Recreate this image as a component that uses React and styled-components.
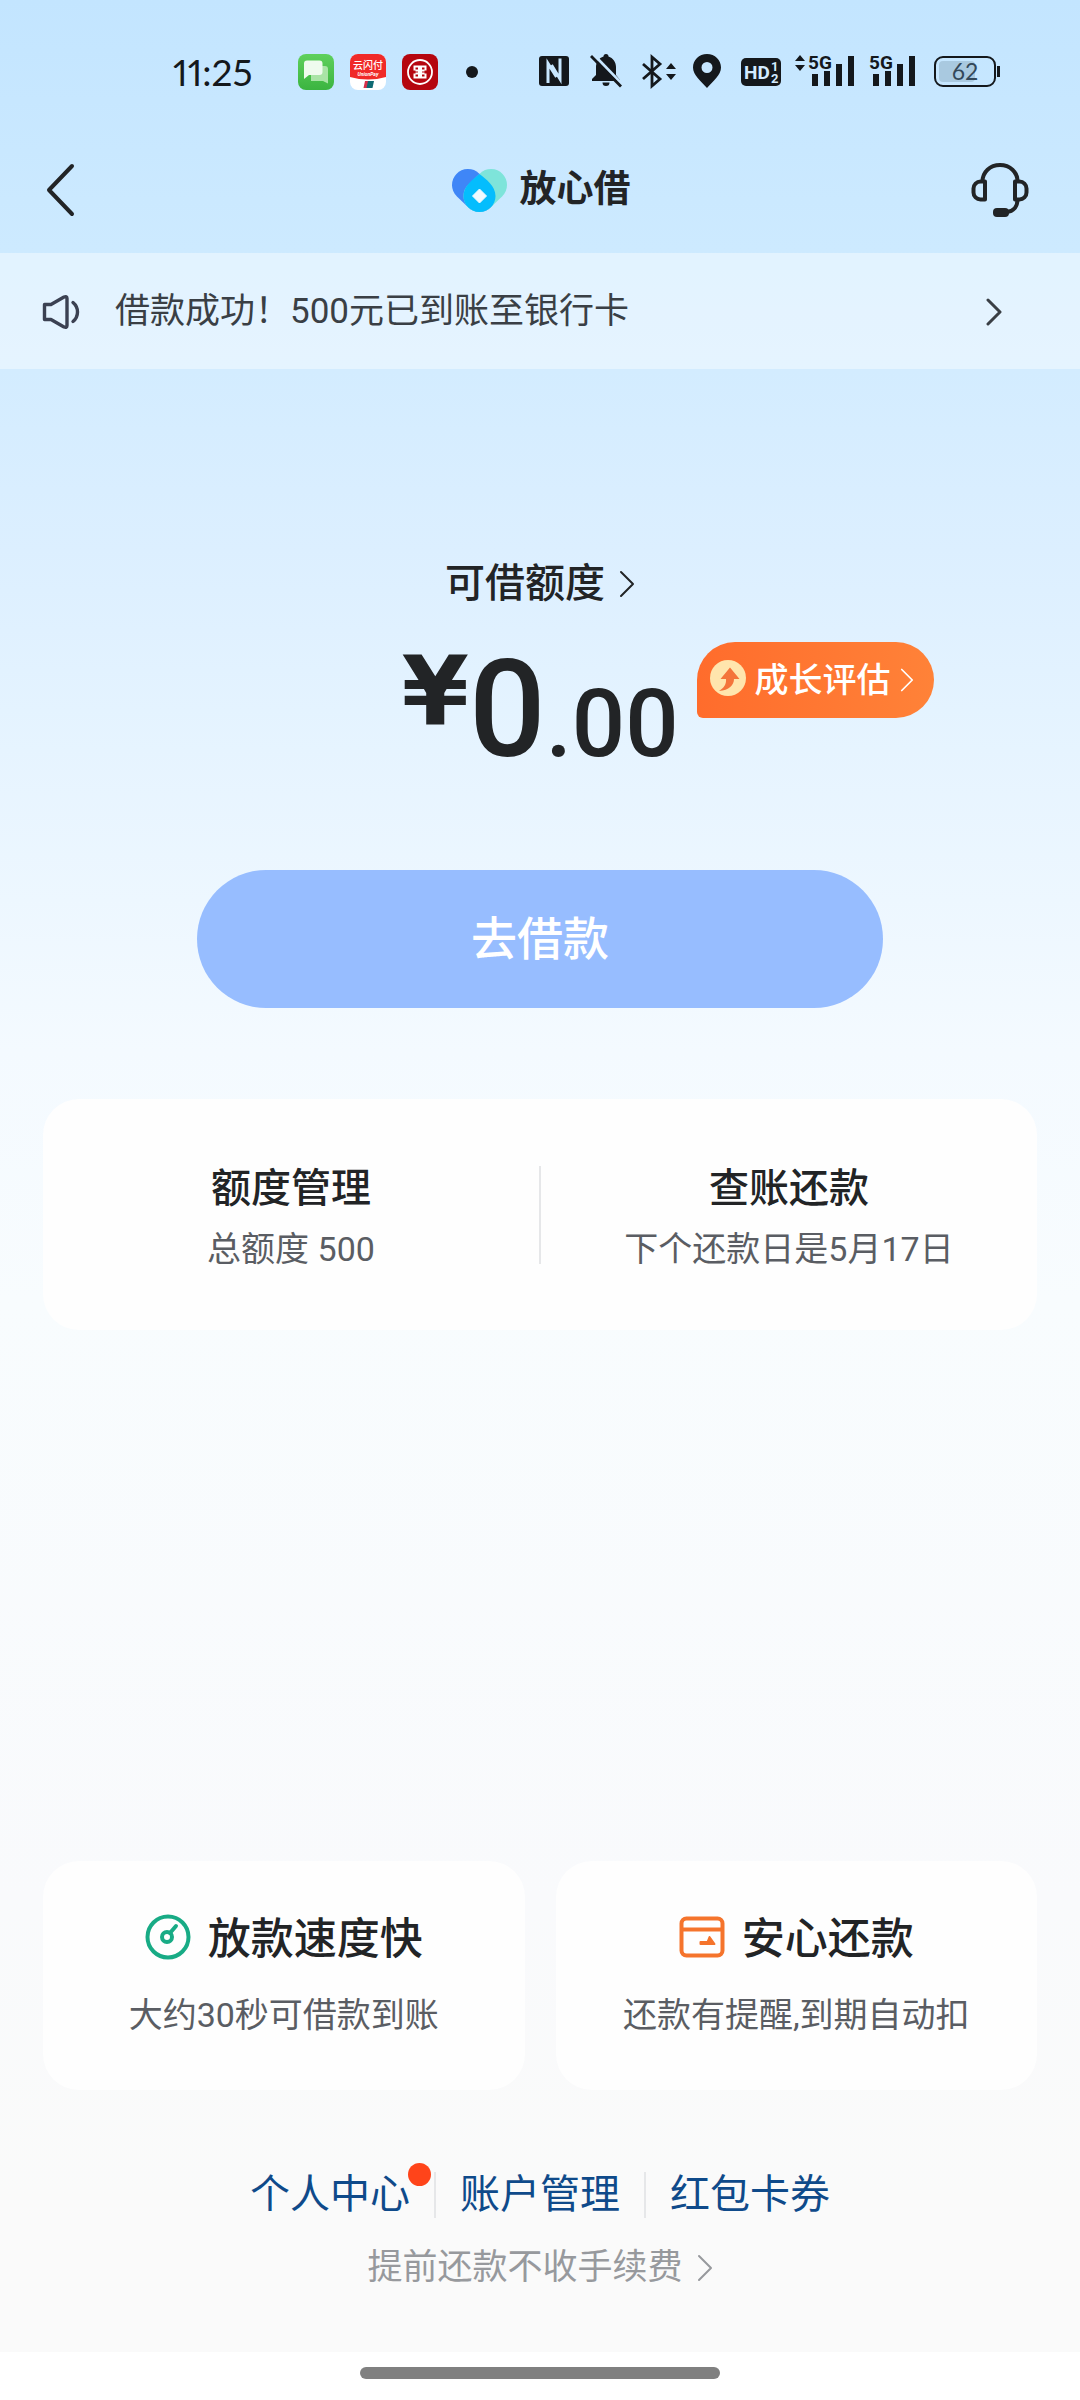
import React from 'react';
import styled, { createGlobalStyle } from 'styled-components';

const GlobalStyle = createGlobalStyle`
  *, *::before, *::after { box-sizing: border-box; }
  body {
    margin: 0;
    color: #222426;
    font-family: Roboto, "Noto Sans CJK SC", sans-serif;
    -webkit-font-smoothing: antialiased;
  }
  h1, h2, p { margin: 0; }
  button { font: inherit; color: inherit; border: 0; padding: 0; background: none; cursor: pointer; }
  a { color: inherit; text-decoration: none; }
  svg { display: block; flex: none; }
`;

const Page = styled.div`
  min-height: 100vh;
  display: flex;
  flex-direction: column;
  background: linear-gradient(180deg, #c3e5ff 0, #cdeaff 250px, #dcefff 550px, #e6f4ff 750px, #f4faff 1050px, #f8fcfe 1300px, #f9fafc 1900px, #fafafa 2200px);
`;

/* ---------- status bar ---------- */

const StatusBar = styled.div`
  height: 126px;
  padding: 18px 79px 0 173px;
  display: flex;
  align-items: center;
  justify-content: space-between;
  color: #14181c;
`;

const StatusGroup = styled.div`
  display: flex;
  align-items: center;
  gap: ${(p) => p.$gap}px;
`;

const Clock = styled.time`
  width: 109px;
  font-family: Lato, sans-serif;
  font-size: 37px;
  line-height: 44px;
  font-variant-numeric: proportional-nums;
`;

/* ---------- header ---------- */

const Header = styled.header`
  height: 127px;
  padding: 0 46px;
  display: grid;
  grid-template-columns: 1fr auto 1fr;
  align-items: center;
`;

const IconButton = styled.button`
  justify-self: ${(p) => p.$side};
`;

const Brand = styled.h1`
  display: flex;
  align-items: center;
  gap: 12px;
  font-size: 37px;
  line-height: 48px;
  font-weight: 700;
`;

const Notice = styled.a`
  height: 116px;
  padding: 2px 78px 0 42px;
  display: flex;
  align-items: center;
  gap: 35px;
  background: rgba(255, 255, 255, 0.42);
  color: #3a3f45;
  font-size: 35px;
  line-height: 48px;
`;

const Grow = styled.span`
  flex: 1;
`;

/* ---------- quota ---------- */

const Quota = styled.main`
  padding-top: 187px;
  display: flex;
  flex-direction: column;
  align-items: center;
`;

const QuotaLink = styled.a`
  display: flex;
  align-items: center;
  gap: 14px;
  font-size: 40px;
  line-height: 56px;
  font-weight: 500;
`;

const AmountRow = styled.div`
  width: 100%;
  margin-top: 30px;
  display: grid;
  grid-template-columns: 1fr auto 1fr;
  align-items: start;
`;

const Amount = styled.p`
  grid-column: 2;
  display: flex;
  align-items: flex-start;
`;

const Currency = styled.span`
  font-family: "DejaVu Sans", sans-serif;
  font-size: 97px;
  line-height: 100px;
  font-weight: 700;
`;

const Digits = styled.span`
  font-size: 135px;
  line-height: 136px;
  font-weight: 500;
`;

const Cents = styled.span`
  font-size: 94px;
  line-height: 94px;
`;

const Badge = styled.button`
  justify-self: start;
  height: 76px;
  margin-left: 18px;
  padding: 0 20px 0 13px;
  display: flex;
  align-items: center;
  gap: 9px;
  border-radius: 38px 38px 38px 6px;
  background: linear-gradient(90deg, #ff6c2c, #ff8238);
  color: #fff;
  font-size: 34px;
  line-height: 48px;
  font-weight: 500;
`;

const BadgeLabel = styled.span`
  display: flex;
  align-items: center;
  gap: 9px;
`;

const BorrowButton = styled.button`
  align-self: stretch;
  height: 138px;
  margin: 92px 197px 0;
  border-radius: 69px;
  background: #97bdff;
  color: #fff;
  font-size: 46px;
  line-height: 64px;
  font-weight: 500;
`;

/* ---------- cards ---------- */

const Card = styled.section`
  border-radius: 36px;
  background: #fefefe;
`;

const AccountCard = styled(Card)`
  margin: 91px 43px 0;
  height: 231px;
  display: flex;
  align-items: center;
`;

const AccountItem = styled.a`
  flex: 1;
  padding-top: 9px;
  text-align: center;
`;

const Divider = styled.i`
  width: 2px;
  height: ${(p) => p.$height}px;
  background: #e6e7e9;
`;

const CardTitle = styled.h2`
  font-size: ${(p) => p.$size}px;
  line-height: 60px;
  font-weight: 500;
`;

const CardText = styled.p`
  color: #5a5d63;
  font-size: 34px;
  line-height: 60px;
`;

const Features = styled.div`
  margin: auto 43px 0;
  display: grid;
  grid-template-columns: 1fr 1fr;
  gap: 31px;
`;

const FeatureCard = styled(Card)`
  height: 229px;
  padding-top: 48px;
  display: flex;
  flex-direction: column;
  align-items: center;
  gap: 16px;
`;

const FeatureHead = styled.div`
  display: flex;
  align-items: center;
  gap: 17px;
`;

/* ---------- footer ---------- */

const Footer = styled.footer`
  height: 262px;
  padding-top: 77px;
  display: flex;
  flex-direction: column;
  align-items: center;
  gap: 21px;
`;

const LinkRow = styled.nav`
  display: flex;
  align-items: center;
  gap: 24px;
  color: #0f4a8a;
  font-size: 40px;
  line-height: 56px;
`;

const FooterLink = styled.a`
  position: relative;
`;

const Dot = styled.i`
  position: absolute;
  top: -4px;
  right: -21px;
  width: 23px;
  height: 23px;
  border-radius: 50%;
  background: #ff441a;
`;

const Tip = styled.a`
  display: flex;
  align-items: center;
  gap: 14px;
  color: #97999d;
  font-size: 35px;
  line-height: 48px;
`;

const HomeArea = styled.div`
  height: 48px;
  padding-bottom: 6px;
  display: flex;
  justify-content: center;
  align-items: center;
  background: #fff;
`;

const HomeBar = styled.i`
  width: 360px;
  height: 12px;
  border-radius: 6px;
  background: #808080;
`;

/* ---------- drawings ---------- */

const Chevron = ({ w = 16, h = 28, stroke = 3 }) => (
  <svg width={w} height={h} viewBox="0 0 16 28" fill="none" stroke="currentColor" strokeWidth={stroke} strokeLinecap="round" strokeLinejoin="round">
    <path d="M2 2l12 12L2 26" />
  </svg>
);

const ChatAppIcon = () => (
  <svg width="36" height="36" viewBox="0 0 36 36">
    <defs>
      <linearGradient id="chat" x1="0" y1="0" x2="0" y2="1">
        <stop offset="0" stopColor="#5fd05c" />
        <stop offset="1" stopColor="#3bb440" />
      </linearGradient>
    </defs>
    <rect width="36" height="36" rx="8" fill="url(#chat)" />
    <path d="M13 12h14a3 3 0 0 1 3 3v14.500L25 27H13z" fill="#a9e4a6" />
    <path d="M9 6.500h12.500a3 3 0 0 1 3 3V18a3 3 0 0 1-3 3H11l-5 4V9.500a3 3 0 0 1 3-3z" fill="#effbee" />
  </svg>
);

const UnionPayIcon = () => (
  <svg width="36" height="36" viewBox="0 0 36 36">
    <defs>
      <clipPath id="up"><rect width="36" height="36" rx="8" /></clipPath>
    </defs>
    <g clipPath="url(#up)">
      <rect width="36" height="36" fill="#fff" />
      <path d="M0 0h36v23q-18 5-36 0z" fill="#f02a28" />
      <path d="M15 27h4l-1.500 7h-4z" fill="#d8304a" />
      <path d="M18 27h6l-1.500 7h-6z" fill="#0e6a73" />
      <text x="18" y="15" textAnchor="middle" fontSize="10" fontWeight="500" fill="#fff">云闪付</text>
      <text x="18" y="22" textAnchor="middle" fontSize="5" fontWeight="700" fontStyle="italic" fill="#fff">UnionPay</text>
    </g>
  </svg>
);

const BankIcon = () => (
  <svg width="36" height="36" viewBox="0 0 36 36">
    <rect width="36" height="36" rx="8" fill="#b5060f" />
    <g fill="none" stroke="#fff">
      <circle cx="18" cy="18" r="12" strokeWidth="1.800" />
      <path d="M11.500 12.500H17v4h-3.500M24.500 12.500H19v4h3.500M11.500 23.500H17v-4h-3.500M24.500 23.500H19v-4h3.500M12.500 12v4.500M23.500 12v4.500M12.500 24v-4.500M23.500 24v-4.500M17 16.500v3M19 16.500v3" strokeWidth="2" />
    </g>
  </svg>
);

const NfcIcon = () => (
  <svg width="34" height="38" viewBox="0 0 34 38">
    <rect y="3" width="30" height="30" rx="3" fill="currentColor" />
    <path d="M9 30V10.500l8.500 13.500M21 5.500v20.500L12.500 12" fill="none" stroke="#c8e7ff" strokeWidth="3" />
  </svg>
);

const BellOffIcon = () => (
  <svg width="38" height="38" viewBox="0 0 38 38">
    <path d="M19 1a2.500 2.500 0 0 1 2.500 2.500C26 5 29 9 29 14v8l4 5v1H5v-2l4-4v-8c0-5 3-9 7.500-10.500A2.500 2.500 0 0 1 19 1zM15.500 29.500h7a3.500 3.500 0 0 1-7 0z" fill="currentColor" />
    <path d="M6 1l29 30" stroke="#c8e7ff" strokeWidth="3" />
    <path d="M4 3l30 30.500" stroke="currentColor" strokeWidth="2.800" />
  </svg>
);

const BluetoothIcon = () => (
  <svg width="39" height="38" viewBox="0 0 39 38">
    <path d="M4 11l17 15-8 7V4l8 7L4 26" fill="none" stroke="currentColor" strokeWidth="2.800" />
    <path d="M27 16l5-6 5 6zM27 21l5 6 5-6z" fill="currentColor" />
  </svg>
);

const PinIcon = () => (
  <svg width="31" height="38" viewBox="0 0 31 38">
    <path fillRule="evenodd" d="M15 1c8 0 14 6 14 13.500C29 22 21 28 15 35 9 28 1 22 1 14.500 1 7 7 1 15 1zm0 8a5.500 5.500 0 1 0 0 11 5.500 5.500 0 0 0 0-11z" fill="currentColor" />
  </svg>
);

const HdIcon = () => (
  <svg width="44" height="38" viewBox="0 0 44 38">
    <rect x="4" y="5" width="40" height="28" rx="5" fill="currentColor" />
    <g fill="#d3ebff" fontWeight="700">
      <text x="7" y="26" fontSize="19">HD</text>
      <text x="34" y="18" fontSize="13">1</text>
      <text x="34" y="30" fontSize="13">2</text>
    </g>
  </svg>
);

const SignalIcon = ({ arrows }) => {
  const x = arrows ? 14 : 1;
  const width = arrows ? 60 : 49;
  return (
    <svg width={width} height="54" viewBox={`0 -8 ${width} 54`} fill="currentColor">
      {arrows && <path d="M0 8l5-6 5 6zM0 12l5 6 5-6z" />}
      <path d={`M${x + 3} 21h6v12h-6zM${x + 15} 18h6v15h-6zM${x + 27} 11h6v22h-6zM${x + 39} 3h6v30h-6z`} />
      <text x={x - 1} y="16" fontSize="19" fontWeight="700">5G</text>
    </svg>
  );
};

const BatteryIcon = () => (
  <svg width="69" height="38" viewBox="0 0 69 38">
    <rect x="7" y="8" width="36" height="21" rx="4" fill="#a9c9e0" />
    <rect x="3" y="4" width="60" height="29" rx="8" fill="none" stroke="currentColor" strokeWidth="2" />
    <path d="M66.500 13v11" stroke="currentColor" strokeWidth="3" />
    <text x="33" y="27" textAnchor="middle" fontSize="23" fontFamily="Lato, sans-serif" fill="#33485a">62</text>
  </svg>
);

const BrandMark = () => (
  <svg width="58" height="46" viewBox="0 0 58 46">
    <path d="M18 18l11.500 11" stroke="#3f86f7" strokeWidth="32" strokeLinecap="round" />
    <path d="M41 18L29.500 29" stroke="#7ee4da" strokeWidth="32" strokeLinecap="round" />
    <path d="M29.500 7C36 12 45.500 19 45.500 29a16 16 0 0 1-32 0c0-10 9.500-17 16-22z" fill="#04bdfd" />
    <path d="M29.500 22l7 7-7 7-7-7z" fill="#effaff" stroke="#effaff" strokeLinejoin="round" />
  </svg>
);

const BackIcon = () => (
  <svg width="29" height="54" viewBox="0 0 29 54" fill="none" stroke="currentColor" strokeWidth="4" strokeLinecap="round" strokeLinejoin="round">
    <path d="M26 3L3 27l23 24" />
  </svg>
);

const HeadsetIcon = () => (
  <svg width="63" height="56" viewBox="0 0 63 56" fill="none" stroke="currentColor" strokeWidth="4" strokeLinejoin="round">
    <path d="M14 19.500v18H9.500a7 7 0 0 1-7-7v-4a7 7 0 0 1 7-7zM44 19.500v18h4.500a7 7 0 0 0 7-7v-4a7 7 0 0 0-7-7z" />
    <path d="M11.500 19.500C11.500 10 19 3 29 3s17.500 7 17.500 16.500M46.500 37.500c0 7-4 12-11 12.500" />
    <rect x="22" y="46" width="16" height="9" rx="4" fill="currentColor" stroke="none" />
  </svg>
);

const SpeakerIcon = () => (
  <svg width="38" height="36" viewBox="0 0 38 36" fill="none" stroke="#3b4152" strokeWidth="3.400" strokeLinecap="round" strokeLinejoin="round">
    <path d="M2.500 10.500H9L22 3q3-1 3 1.500v27Q25 34 22 33L9 25.500H2.500zM31 8.500c6 5 6 14 0 19" />
  </svg>
);

const GrowthIcon = () => (
  <svg width="36" height="40" viewBox="0 0 36 40">
    <circle cx="18" cy="18" r="18" fill="#ffe5ad" />
    <path d="M20 7.500L29.500 19H24c0 6-5 11.500-15 12 5-3 7.500-7 7-12h-5.500z" fill="#f4743b" />
  </svg>
);

const SpeedIcon = () => (
  <svg width="46" height="50" viewBox="0 0 46 50" fill="none" stroke="#18ab85" strokeWidth="4">
    <circle cx="23" cy="23" r="20.500" />
    <circle cx="22" cy="23" r="5" />
    <path d="M25 19l6-7" strokeLinecap="round" />
  </svg>
);

const WalletIcon = () => (
  <svg width="46" height="46" viewBox="0 0 46 46" fill="none" stroke="#f5742c" strokeWidth="4">
    <rect x="2.500" y="2.500" width="41" height="37" rx="5" />
    <path d="M3 13.500h40" />
    <path d="M21.500 26h7l2-5 5 7h-14z" fill="#f5742c" strokeWidth="2" strokeLinejoin="round" />
  </svg>
);

export default function App() {
  return (
    <>
      <GlobalStyle />
      <Page>
        <StatusBar>
          <StatusGroup $gap={16}>
            <Clock>11:25</Clock>
            <ChatAppIcon />
            <UnionPayIcon />
            <BankIcon />
            <svg width="36" height="36" viewBox="0 0 36 36"><circle cx="18" cy="18" r="6" fill="currentColor" /></svg>
          </StatusGroup>
          <StatusGroup $gap={14}>
            <NfcIcon />
            <BellOffIcon />
            <BluetoothIcon />
            <PinIcon />
            <HdIcon />
            <SignalIcon arrows />
            <SignalIcon />
            <BatteryIcon />
          </StatusGroup>
        </StatusBar>

        <Header>
          <IconButton $side="start" aria-label="返回"><BackIcon /></IconButton>
          <Brand><BrandMark />放心借</Brand>
          <IconButton $side="end" aria-label="客服"><HeadsetIcon /></IconButton>
        </Header>

        <Notice href="#notice">
          <SpeakerIcon />
          <Grow>借款成功！500元已到账至银行卡</Grow>
          <Chevron />
        </Notice>

        <Quota>
          <QuotaLink href="#quota">可借额度<Chevron h={30} stroke={2} /></QuotaLink>
          <AmountRow>
            <Amount>
              <Currency>¥</Currency>
              <Digits>0<Cents>.00</Cents></Digits>
            </Amount>
            <Badge>
              <GrowthIcon />
              <BadgeLabel>成长评估<Chevron w={14} stroke={2} /></BadgeLabel>
            </Badge>
          </AmountRow>
          <BorrowButton>去借款</BorrowButton>
        </Quota>

        <AccountCard>
          <AccountItem href="#limit">
            <CardTitle $size={40}>额度管理</CardTitle>
            <CardText>总额度 500</CardText>
          </AccountItem>
          <Divider $height={98} />
          <AccountItem href="#bill">
            <CardTitle $size={40}>查账还款</CardTitle>
            <CardText>下个还款日是5月17日</CardText>
          </AccountItem>
        </AccountCard>

        <Features>
          <FeatureCard>
            <FeatureHead><SpeedIcon /><CardTitle $size={43}>放款速度快</CardTitle></FeatureHead>
            <CardText>大约30秒可借款到账</CardText>
          </FeatureCard>
          <FeatureCard>
            <FeatureHead><WalletIcon /><CardTitle $size={43}>安心还款</CardTitle></FeatureHead>
            <CardText>还款有提醒,到期自动扣</CardText>
          </FeatureCard>
        </Features>

        <Footer>
          <LinkRow>
            <FooterLink href="#me">个人中心<Dot /></FooterLink>
            <Divider $height={46} />
            <FooterLink href="#account">账户管理</FooterLink>
            <Divider $height={46} />
            <FooterLink href="#coupons">红包卡券</FooterLink>
          </LinkRow>
          <Tip href="#fee">提前还款不收手续费<Chevron stroke={2} /></Tip>
        </Footer>

        <HomeArea><HomeBar /></HomeArea>
      </Page>
    </>
  );
}
